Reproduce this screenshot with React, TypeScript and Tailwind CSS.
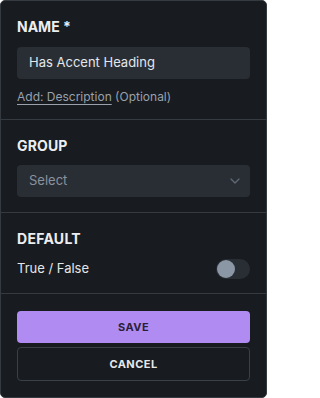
import React from "react";

export default function App() {
  return (
    <div
      className="w-[267px] h-[398px] border border-[#353a41] rounded-[5px] bg-[#181b1f] flex flex-col text-[#e6e8eb]"
      style={{ fontFamily: "Inter, 'Noto Sans', sans-serif" }}
    >
      <div className="px-4 pt-4 pb-[14px] flex flex-col">
        <div className="text-[14px] leading-5 font-bold text-[#eceef1]">NAME *</div>
        <div className="mt-[10px] h-8 rounded-[4px] bg-[#292e35] flex items-center px-3 text-[13px] text-[#e3e6ea]">
          Has Accent Heading
        </div>
        <div className="mt-[10px] text-[12px] leading-4 text-[#9aa1ab]">
          <span className="underline underline-offset-[3px] decoration-[#9aa1ab]">Add: Description</span>{" "}
          (Optional)
        </div>
      </div>
      <div className="h-px bg-[#353a41]" />
      <div className="px-4 pt-4 pb-[15px] flex flex-col">
        <div className="text-[14px] leading-5 font-bold text-[#eceef1] tracking-[0.01em]">GROUP</div>
        <div className="mt-[9px] h-8 rounded-[4px] bg-[#292e35] flex items-center justify-between pl-3 pr-[10px] text-[13px] text-[#8a929d]">
          <span>Select</span>
          <svg width="10" height="6" viewBox="0 0 10 6" fill="none">
            <path d="M1 1l4 4 4-4" stroke="#636b76" strokeWidth="1.2" strokeLinecap="round" strokeLinejoin="round" />
          </svg>
        </div>
      </div>
      <div className="h-px bg-[#353a41]" />
      <div className="px-4 pt-4 pb-[14px] flex flex-col">
        <div className="text-[14px] leading-5 font-bold text-[#eceef1] tracking-[0.02em]">DEFAULT</div>
        <div className="mt-[10px] h-5 flex items-center justify-between">
          <span className="text-[13px] text-[#e3e6ea]">True / False</span>
          <div className="w-[34px] h-5 rounded-full bg-[#292e35] flex items-center px-px">
            <div className="w-[18px] h-[18px] rounded-full bg-[#8c97a5]" />
          </div>
        </div>
      </div>
      <div className="h-px bg-[#353a41]" />
      <div className="px-4 pt-[17px] flex flex-col gap-1">
        <div className="h-8 rounded-[4px] bg-[#b08cf2] flex items-center justify-center text-[11px] font-bold tracking-[0.04em] text-[#2a2138]">
          SAVE
        </div>
        <div className="h-[34px] rounded-[4px] border border-[#3a4048] flex items-center justify-center text-[11px] font-bold tracking-[0.04em] text-[#e6e8eb]">
          CANCEL
        </div>
      </div>
    </div>
  );
}
